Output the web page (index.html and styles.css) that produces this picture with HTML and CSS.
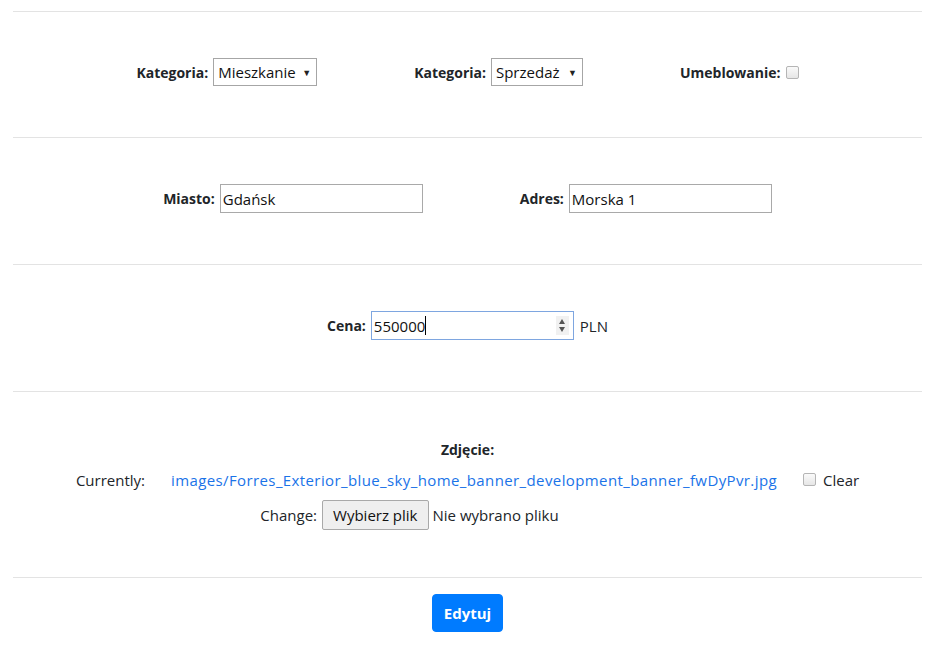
FILE: index.html
```html
<!DOCTYPE html>
<html lang="pl">
<head>
<meta charset="utf-8">
<title>Edytuj ogłoszenie</title>
<link rel="stylesheet" href="styles.css">
</head>
<body>
<div class="page">
  <hr class="rule">
  <section class="row first">
    <div class="group"><span class="label">Kategoria:</span><span class="select w1"><span>Mieszkanie</span><span class="tri">&#9660;</span></span></div>
    <div class="group"><span class="label">Kategoria:</span><span class="select w2"><span>Sprzedaż</span><span class="tri">&#9660;</span></span></div>
    <div class="group"><span class="label">Umeblowanie:</span><span class="check"></span></div>
  </section>
  <hr class="rule">
  <section class="row">
    <div class="group"><span class="label">Miasto:</span><span class="input">Gdańsk</span></div>
    <div class="group"><span class="label">Adres:</span><span class="input">Morska 1</span></div>
  </section>
  <hr class="rule">
  <section class="row">
    <div class="group"><span class="label">Cena:</span><span class="input focus"><span class="val">550000</span><span class="caret"></span><span class="spin"><span class="up"></span><span class="down"></span></span></span><span class="unit">PLN</span></div>
  </section>
  <hr class="rule">
  <section class="photo">
    <div class="label">Zdjęcie:</div>
    <div class="current"><span>Currently:</span><a class="link" href="#">images/Forres_Exterior_blue_sky_home_banner_development_banner_fwDyPvr.jpg</a><span class="clear"><span class="check"></span><span>Clear</span></span></div>
    <div class="change"><span>Change:</span><span class="filebtn">Wybierz plik</span><span class="nofile">Nie wybrano pliku</span></div>
  </section>
  <hr class="rule">
  <div class="actions"><button class="btn" type="button">Edytuj</button></div>
</div>
</body>
</html>
```
FILE: styles.css
```css
html, body { margin: 0; padding: 0; background: #fff; }
body { font-family: "Open Sans", "Noto Sans", sans-serif; font-size: 14px; color: #212529; }
.page { padding: 11px 15px 0 13px; }
.rule { margin: 0; border: 0; border-top: 1px solid #e3e3e3; height: 0; }
.row { box-sizing: border-box; height: 126px; padding-bottom: 5px; display: flex; justify-content: center; align-items: center; gap: 97px; }
.row.first { height: 125px; padding-bottom: 5px; }
.group { display: flex; align-items: center; }
.label { font-weight: 700; margin-right: 5px; }
.select { box-sizing: border-box; height: 28px; border: 1px solid #a6a6a6; display: flex; align-items: center; justify-content: space-between; padding: 0 5px 0 4px; font-size: 15px; color: #111; }
.w1 { width: 104px; }
.w2 { width: 92px; }
.tri { font-size: 9px; color: #222; }
.check { display: inline-block; box-sizing: border-box; width: 13px; height: 13px; border: 1px solid #b5b5b5; border-radius: 2px; background: linear-gradient(#fafafa, #e6e6e6); }
.input { box-sizing: border-box; width: 203px; height: 29px; border: 1px solid #a9a9a9; display: flex; align-items: center; padding: 0 2px; font-size: 15px; color: #111; position: relative; }
.input.focus { border-color: #7ea6e0; }
.caret { display: inline-block; width: 1px; height: 19px; background: #000; }
.spin { position: absolute; right: 4px; top: 4px; width: 13px; height: 19px; background: #f1f1f1; }
.up, .down { position: absolute; left: 3px; width: 0; height: 0; border-left: 3.5px solid transparent; border-right: 3.5px solid transparent; }
.up { top: 3px; border-bottom: 5px solid #555; }
.down { bottom: 3px; border-top: 5px solid #555; }
.unit { margin-left: 6px; font-size: 15px; }
.photo { box-sizing: border-box; height: 185px; display: flex; flex-direction: column; align-items: center; justify-content: center; font-size: 15px; }
.photo .label { margin: 0 0 11px 0; font-size: 14px; }
.current { display: flex; align-items: center; gap: 26px; }
.link { color: #1a73e8; text-decoration: none; letter-spacing: 0.39px; }
.clear { display: flex; align-items: center; gap: 7px; }
.change { display: flex; align-items: center; margin-top: 10px; margin-right: 116px; }
.filebtn { box-sizing: border-box; height: 30px; padding: 0 10px; display: flex; align-items: center; margin-left: 5px; background: #efefef; border: 1px solid #a9a9a9; border-radius: 2px; color: #111; }
.nofile { margin-left: 4px; }
.actions { display: flex; justify-content: center; padding-top: 16px; }
.btn { font-family: inherit; font-size: 15px; font-weight: 700; color: #fff; background: #007bff; border: 1px solid #007bff; border-radius: 4px; width: 71px; height: 38px; padding: 0; }
```
